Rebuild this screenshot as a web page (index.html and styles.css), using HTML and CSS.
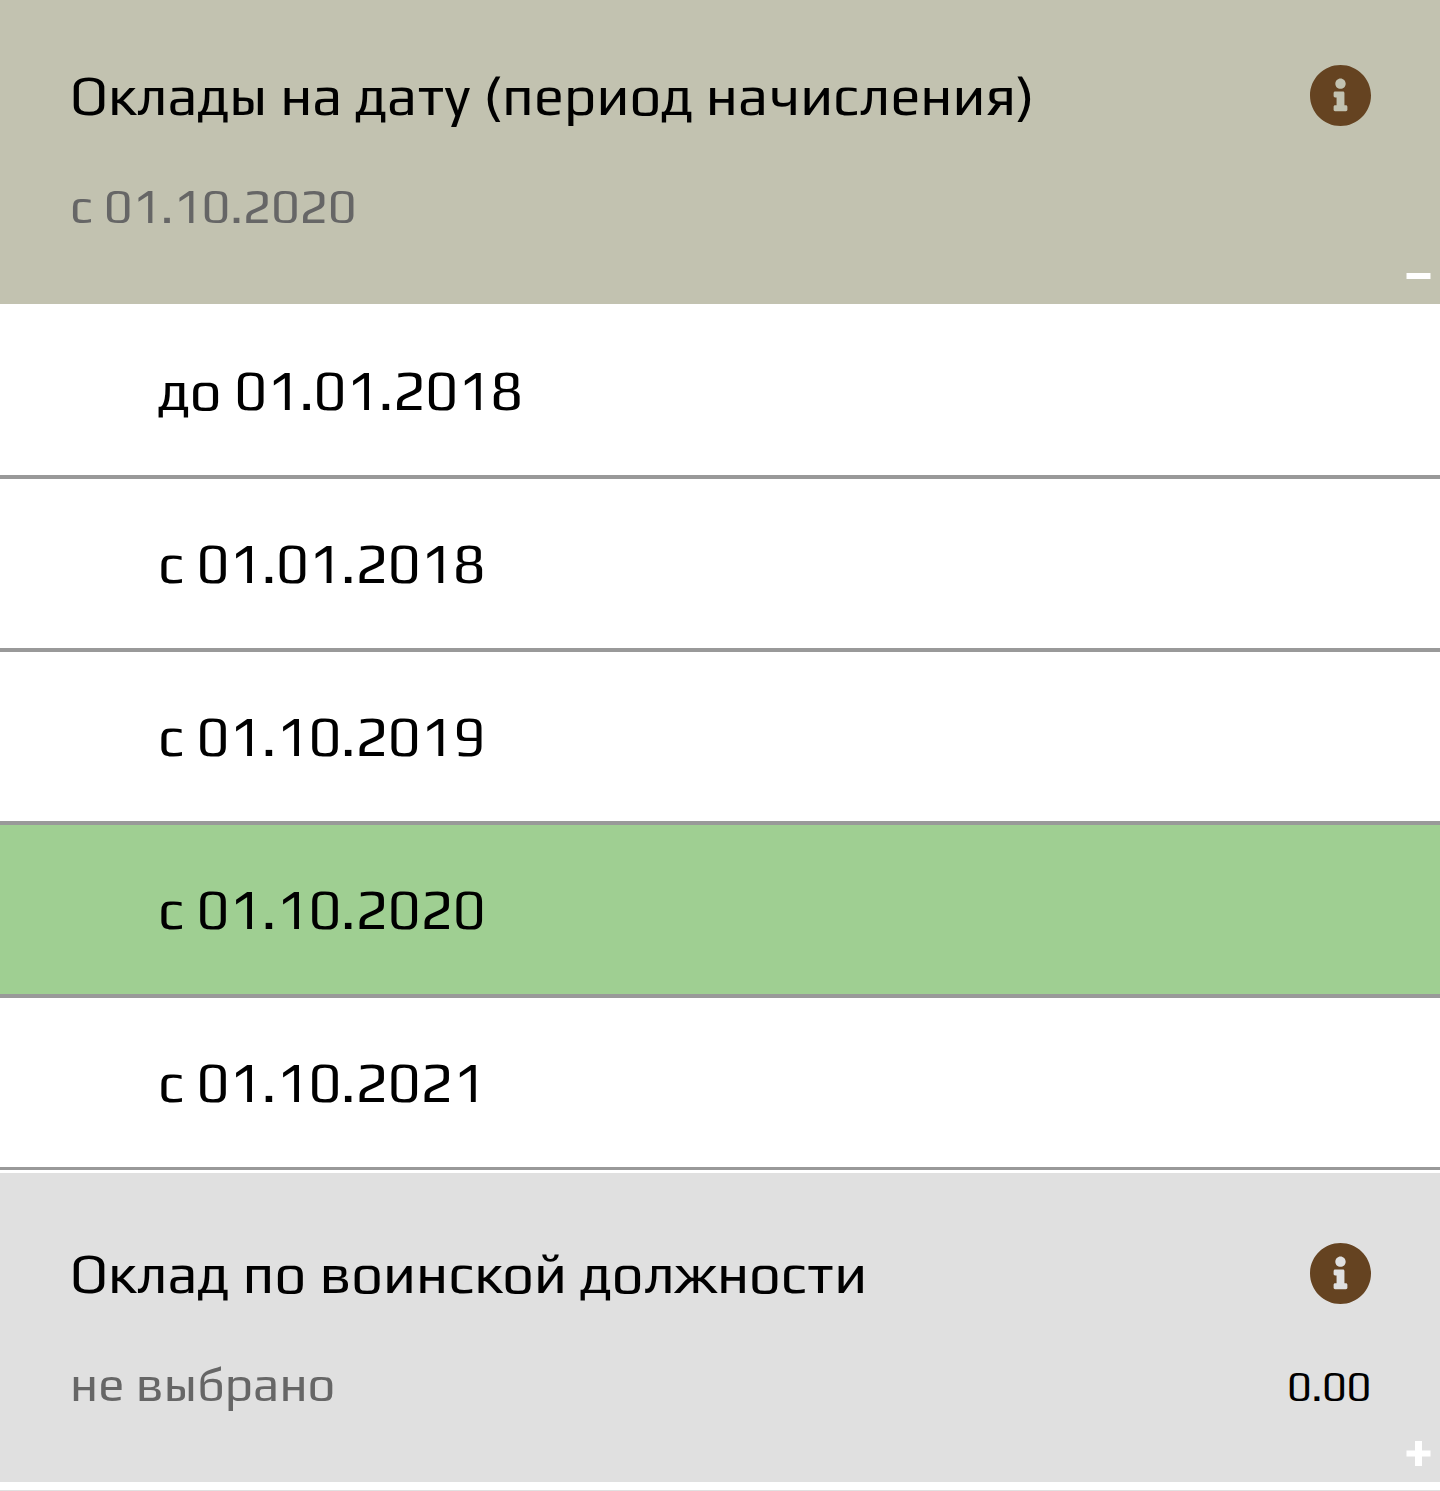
FILE: index.html
```html
<!DOCTYPE html>
<html lang="ru">
<head>
<meta charset="utf-8">
<meta name="viewport" content="width=device-width, initial-scale=1">
<title>Оклады</title>
<link rel="stylesheet" href="styles.css">
</head>
<body>
<svg class="sprite" aria-hidden="true">
  <symbol id="info" viewBox="8 8 496 496">
    <path d="M256 8C119 8 8 119 8 256s111 248 248 248 248-111 248-248S393 8 256 8zm0 110c23 0 42 19 42 42s-19 42-42 42-42-19-42-42 19-42 42-42zm56 254c0 7-5 12-12 12h-88c-7 0-12-5-12-12v-24c0-7 5-12 12-12h12v-64h-12c-7 0-12-5-12-12v-24c0-7 5-12 12-12h64c7 0 12 5 12 12v100h12c7 0 12 5 12 12v24z"/>
  </symbol>
</svg>
<main>
  <section class="panel panel-open">
    <div class="line">
      <h2 class="title">Оклады на дату (период начисления)</h2>
      <button class="info" type="button" aria-label="Справка"><svg><use href="#info"/></svg></button>
    </div>
    <div class="line line-value">
      <span class="chosen">с 01.10.2020</span>
    </div>
    <button class="toggle" type="button" aria-label="Свернуть"><svg viewBox="0 0 25 25"><path d="M.5 10h24v6H.5z"/></svg></button>
  </section>
  <ul class="options">
    <li><button class="option" type="button">до 01.01.2018</button></li>
    <li><button class="option" type="button">с 01.01.2018</button></li>
    <li><button class="option" type="button">с 01.10.2019</button></li>
    <li><button class="option selected" type="button">с 01.10.2020</button></li>
    <li><button class="option" type="button">с 01.10.2021</button></li>
  </ul>
  <section class="panel">
    <div class="line">
      <h2 class="title">Оклад по воинской должности</h2>
      <button class="info" type="button" aria-label="Справка"><svg><use href="#info"/></svg></button>
    </div>
    <div class="line line-value">
      <span class="chosen">не выбрано</span>
      <span class="amount">0.00</span>
    </div>
    <button class="toggle" type="button" aria-label="Развернуть"><svg viewBox="0 0 25 25"><path d="M9 0h7v9.500h8.500v6H16V25H9v-9.500H.5v-6H9z"/></svg></button>
  </section>
  <div class="next"></div>
</main>
</body>
</html>
```
FILE: styles.css
```css
* { box-sizing: border-box; }
body {
  margin: 0;
  background: #fff;
  color: #000;
  font-family: Play, "Noto Sans", sans-serif;
}
button {
  padding: 0;
  border: 0;
  background: none;
  color: inherit;
  font: inherit;
  cursor: pointer;
}
.sprite { position: absolute; width: 0; height: 0; }
.panel {
  position: relative;
  padding: 64px 69px 63px 70px;
  background: #e0e0e0;
}
.panel-open { padding-top: 59px; background: #c2c2b0; }
.line {
  display: flex;
  align-items: center;
  justify-content: space-between;
  gap: 24px;
  min-height: 72px;
}
.line-value { align-items: baseline; min-height: 71px; margin-top: 39px; }
.title { margin: 0; font-size: 56px; line-height: 72px; font-weight: 400; }
.info { flex: none; width: 61px; height: 61px; color: #654321; }
.info svg { display: block; width: 100%; height: 100%; fill: currentColor; }
.chosen { color: #666; font-size: 49px; line-height: 71px; }
.amount { font-size: 42px; line-height: 60px; }
.toggle { position: absolute; right: 9px; bottom: 16px; width: 25px; height: 25px; }
.toggle svg { display: block; width: 25px; height: 25px; fill: #fff; }
.options { margin: 0; padding: 2px 0 3px; list-style: none; }
.option {
  display: block;
  width: 100%;
  padding: 48px 158px 49px;
  border-bottom: 4px solid #999;
  font-size: 56px;
  line-height: 72px;
  text-align: left;
}
.options li:last-child .option { border-bottom-width: 3px; }
.selected { background: #9fcf92; }
.next { margin-top: 8px; height: 1px; background: #e0e0e0; }
```
